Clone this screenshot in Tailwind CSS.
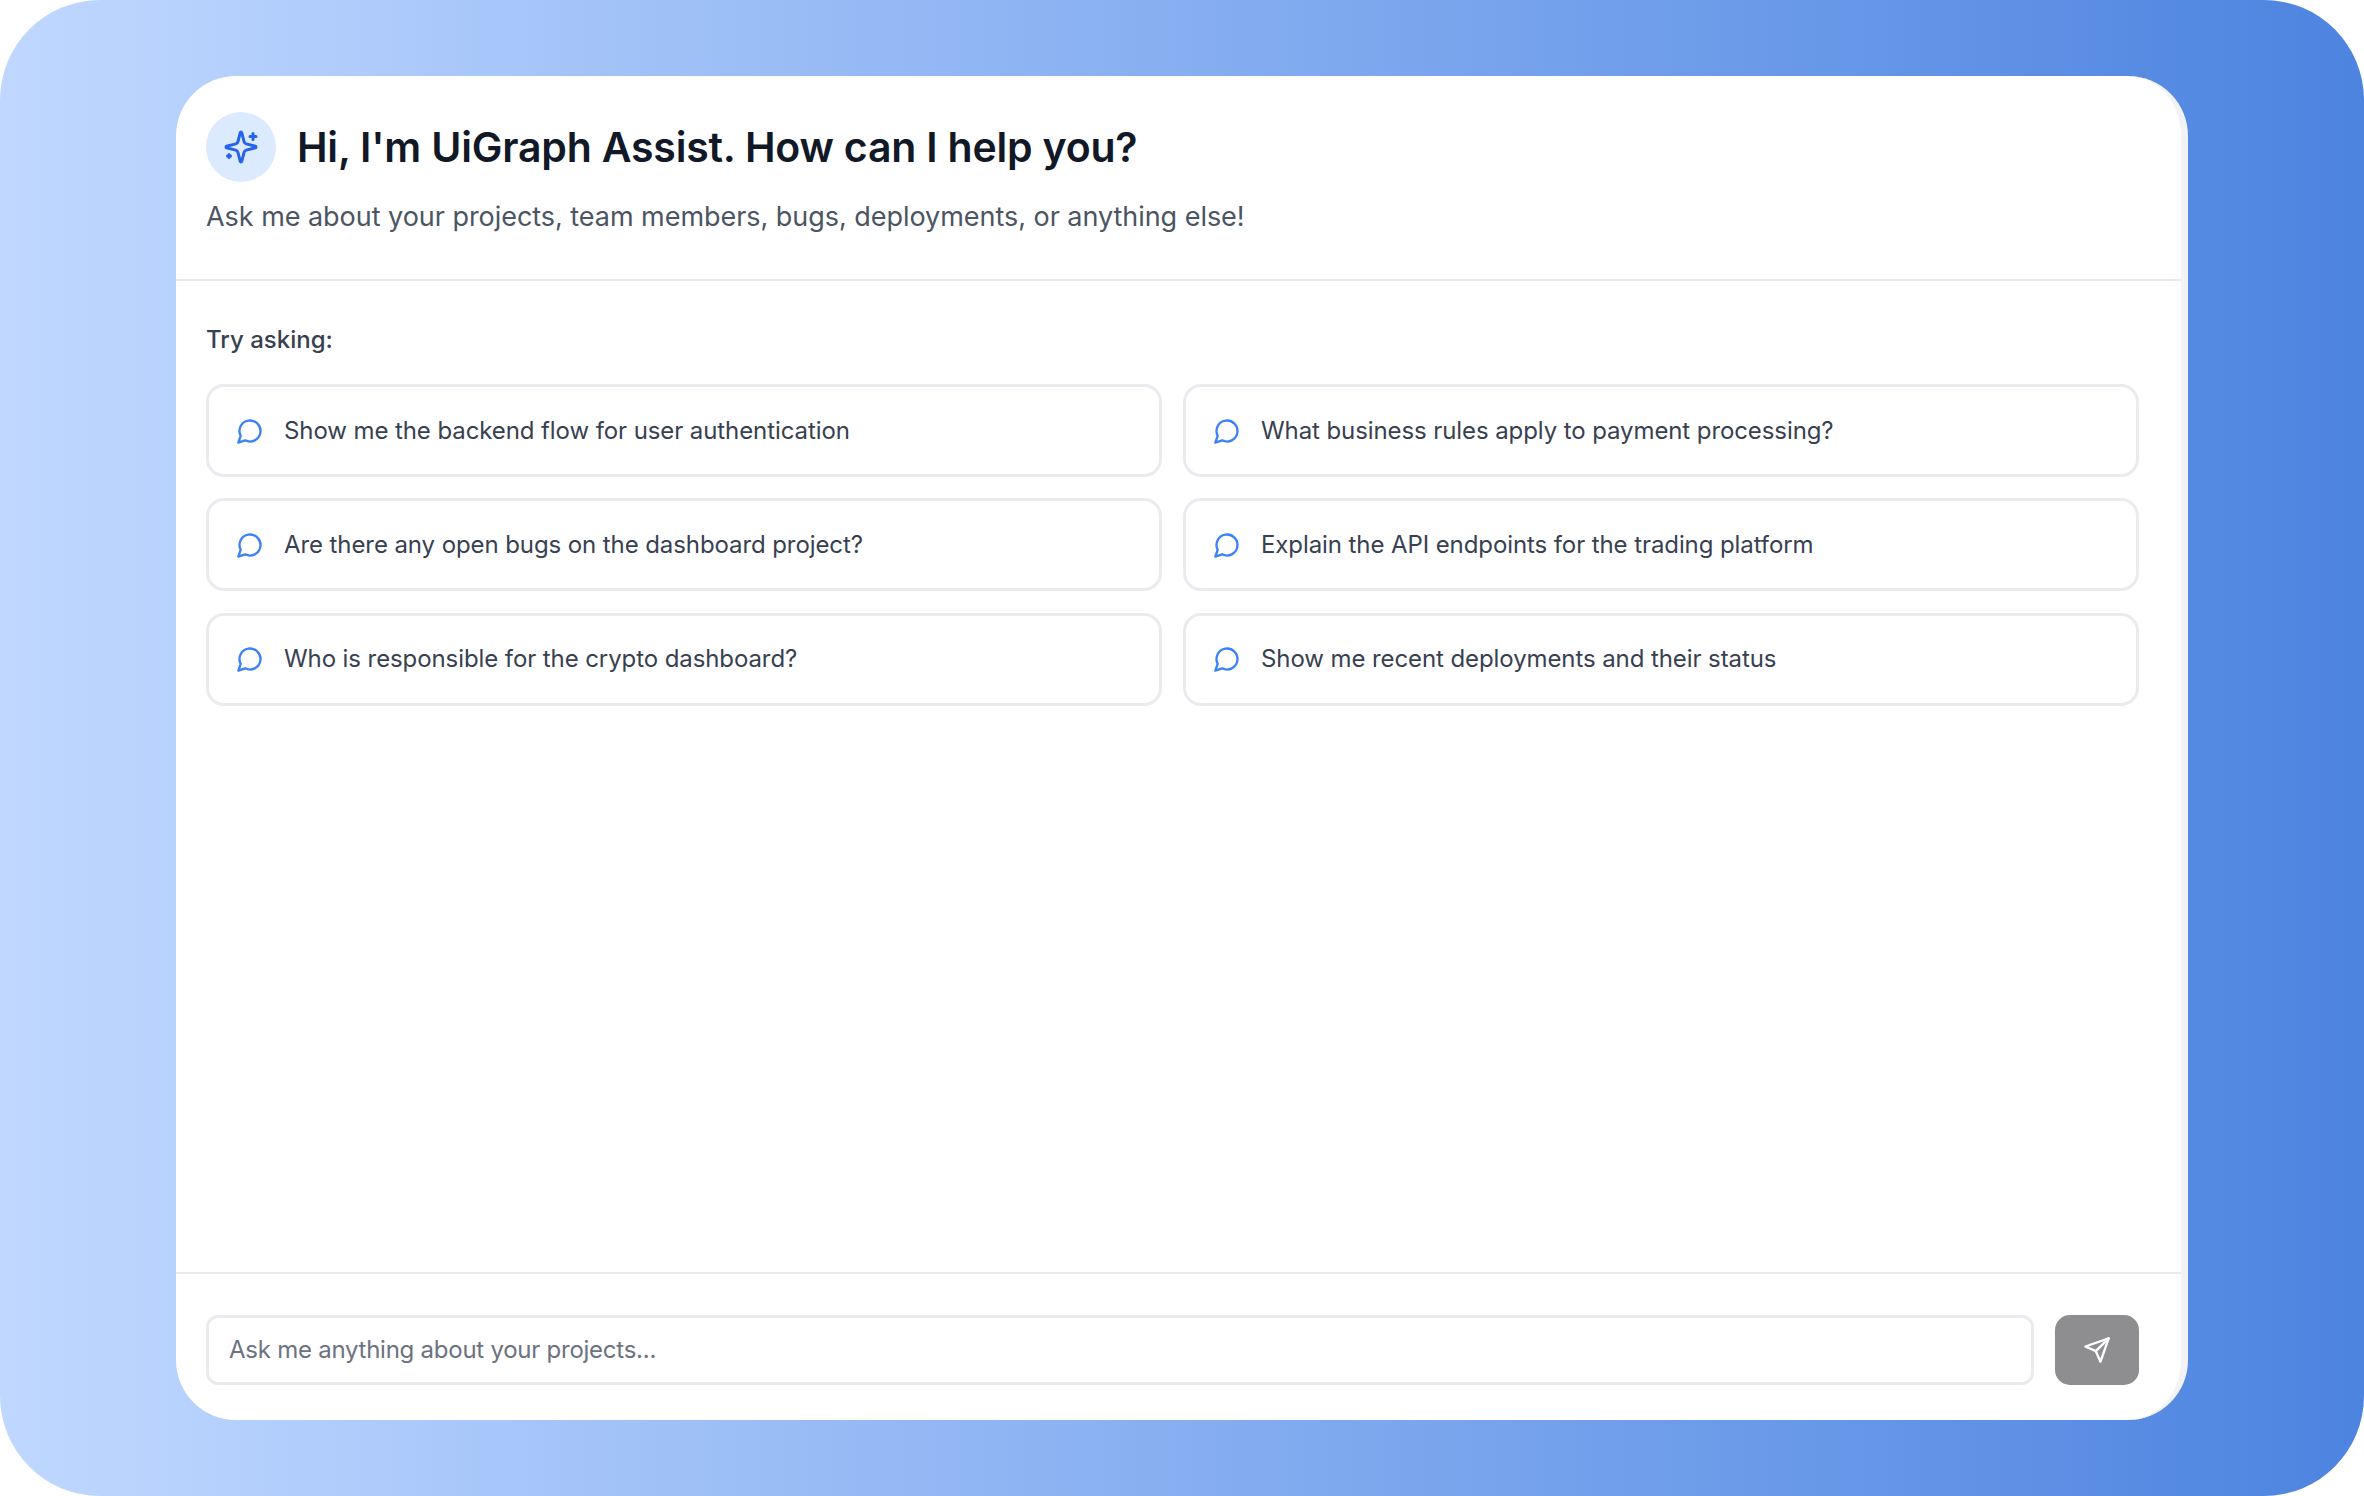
<!DOCTYPE html>
<html lang="en">
  <head>
    <meta charset="UTF-8" />
    <title>UiGraph Assist</title>
    <script src="https://cdn.jsdelivr.net/npm/@tailwindcss/browser@4"></script>
  </head>
  <body class="bg-white font-['Inter',sans-serif]">
    <div class="w-[2364px] h-[1496px] rounded-[100px] bg-gradient-to-r from-[#c0d8ff] to-[#4d84e0] px-[176px] py-[76px]">
      <div class="h-full rounded-[60px] bg-white overflow-hidden flex flex-col border-r-[7px] border-[#f3f3f5]">
        <!-- Header -->
        <div class="h-[205px] shrink-0 border-b-2 border-[#e9eaef] px-[30px] pt-[36px]">
          <div class="flex items-center gap-[21px]">
            <div class="w-[70px] h-[70px] rounded-full bg-[#dbeafe] flex items-center justify-center">
              <svg xmlns="http://www.w3.org/2000/svg" fill="none" viewBox="0 0 24 24" stroke-width="2" stroke="#2563eb" stroke-linecap="round" stroke-linejoin="round" class="w-[36px] h-[36px]">
                <path d="M9.937 15.5A2 2 0 0 0 8.5 14.063l-6.135-1.582a.5.5 0 0 1 0-.962L8.5 9.936A2 2 0 0 0 9.937 8.5l1.582-6.135a.5.5 0 0 1 .963 0L14.063 8.5A2 2 0 0 0 15.5 9.937l6.135 1.581a.5.5 0 0 1 0 .964L15.5 14.063a2 2 0 0 0-1.437 1.437l-1.582 6.135a.5.5 0 0 1-.963 0z" />
                <path d="M20 3v4M22 5h-4M4 17v2M5 18H3" />
              </svg>
            </div>
            <h1 class="text-[41px] leading-[53px] tracking-[-0.2px] font-semibold text-[#111827]">Hi, I'm UiGraph Assist. How can I help you?</h1>
          </div>
          <p class="mt-[17px] text-[27px] leading-[36px] tracking-[-0.04px] text-[#4b5563]">Ask me about your projects, team members, bugs, deployments, or anything else!</p>
        </div>
        <!-- Suggestions -->
        <div class="flex-1 px-[30px] pt-[43px]">
          <p class="text-[24px] leading-[32px] font-medium text-[#374151]">Try asking:</p>
          <div class="mt-[28px] grid grid-cols-2 gap-x-[21px] gap-y-[21.3px] pr-[12px] text-[24px] leading-[32px] tracking-[-0.09px] text-[#374151]">
            <div class="h-[93px] border-[3px] border-[#eaebee] rounded-[18px] flex items-center gap-[20px] px-[27px]">
              <svg xmlns="http://www.w3.org/2000/svg" fill="none" viewBox="0 0 24 24" stroke-width="2" stroke="#3b82f6" stroke-linecap="round" stroke-linejoin="round" class="w-[28px] h-[28px] shrink-0"><path d="M7.9 20A9 9 0 1 0 4 16.1L2 22Z" /></svg>
              <span>Show me the backend flow for user authentication</span>
            </div>
            <div class="h-[93px] border-[3px] border-[#eaebee] rounded-[18px] flex items-center gap-[20px] px-[27px]">
              <svg xmlns="http://www.w3.org/2000/svg" fill="none" viewBox="0 0 24 24" stroke-width="2" stroke="#3b82f6" stroke-linecap="round" stroke-linejoin="round" class="w-[28px] h-[28px] shrink-0"><path d="M7.9 20A9 9 0 1 0 4 16.1L2 22Z" /></svg>
              <span>What business rules apply to payment processing?</span>
            </div>
            <div class="h-[93px] border-[3px] border-[#eaebee] rounded-[18px] flex items-center gap-[20px] px-[27px]">
              <svg xmlns="http://www.w3.org/2000/svg" fill="none" viewBox="0 0 24 24" stroke-width="2" stroke="#3b82f6" stroke-linecap="round" stroke-linejoin="round" class="w-[28px] h-[28px] shrink-0"><path d="M7.9 20A9 9 0 1 0 4 16.1L2 22Z" /></svg>
              <span>Are there any open bugs on the dashboard project?</span>
            </div>
            <div class="h-[93px] border-[3px] border-[#eaebee] rounded-[18px] flex items-center gap-[20px] px-[27px]">
              <svg xmlns="http://www.w3.org/2000/svg" fill="none" viewBox="0 0 24 24" stroke-width="2" stroke="#3b82f6" stroke-linecap="round" stroke-linejoin="round" class="w-[28px] h-[28px] shrink-0"><path d="M7.9 20A9 9 0 1 0 4 16.1L2 22Z" /></svg>
              <span>Explain the API endpoints for the trading platform</span>
            </div>
            <div class="h-[93px] border-[3px] border-[#eaebee] rounded-[18px] flex items-center gap-[20px] px-[27px]">
              <svg xmlns="http://www.w3.org/2000/svg" fill="none" viewBox="0 0 24 24" stroke-width="2" stroke="#3b82f6" stroke-linecap="round" stroke-linejoin="round" class="w-[28px] h-[28px] shrink-0"><path d="M7.9 20A9 9 0 1 0 4 16.1L2 22Z" /></svg>
              <span>Who is responsible for the crypto dashboard?</span>
            </div>
            <div class="h-[93px] border-[3px] border-[#eaebee] rounded-[18px] flex items-center gap-[20px] px-[27px]">
              <svg xmlns="http://www.w3.org/2000/svg" fill="none" viewBox="0 0 24 24" stroke-width="2" stroke="#3b82f6" stroke-linecap="round" stroke-linejoin="round" class="w-[28px] h-[28px] shrink-0"><path d="M7.9 20A9 9 0 1 0 4 16.1L2 22Z" /></svg>
              <span>Show me recent deployments and their status</span>
            </div>
          </div>
        </div>
        <!-- Input bar -->
        <div class="h-[148px] shrink-0 border-t-2 border-[#e9eaef] pl-[30px] pr-[42px] pt-[41px] flex gap-[21px]">
          <div class="flex-1 h-[70px] border-[3px] border-[#eaebee] rounded-[12px] flex items-center px-[20px] text-[24px] tracking-[-0.25px] text-[#6b7280]">Ask me anything about your projects...</div>
          <button class="w-[84px] h-[70px] rounded-[15px] bg-[#8e8e90] flex items-center justify-center">
            <svg xmlns="http://www.w3.org/2000/svg" fill="none" viewBox="0 0 24 24" stroke-width="2" stroke="#ffffff" stroke-linecap="round" stroke-linejoin="round" class="w-[28px] h-[28px]">
              <path d="m22 2-7 20-4-9-9-4Z" />
              <path d="M22 2 11 13" />
            </svg>
          </button>
        </div>
      </div>
    </div>
  </body>
</html>
